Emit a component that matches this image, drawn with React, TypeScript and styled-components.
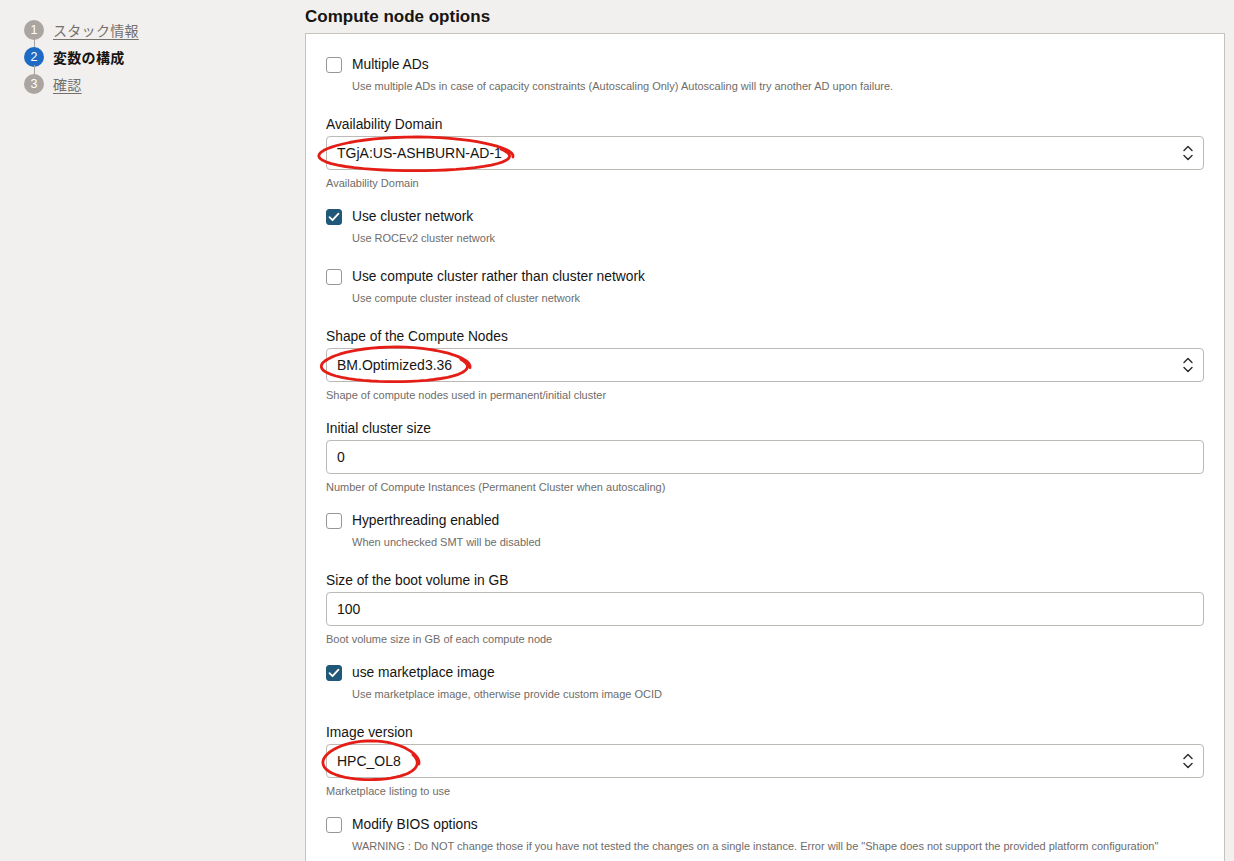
import React from 'react'
import styled, {createGlobalStyle} from 'styled-components'

const GlobalStyle = createGlobalStyle`
    html, body {
        margin: 0;
        padding: 0;
        background: #f2f0ee;
        font-family: "Liberation Sans", Arial, "Noto Sans CJK JP", sans-serif;
        color: #161513;
    }
`;

const Page = styled.div`
    display: flex;
    align-items: flex-start;
    min-height: 861px;
`;

const Sidebar = styled.nav`
    width: 305px;
    flex-shrink: 0;
    box-sizing: border-box;
    padding: 16px 0 0 24px;
    display: flex;
    flex-direction: column;
`;

const Step = styled.div<{ $last?: boolean }>`
    position: relative;
    display: flex;
    align-items: center;
    gap: 9px;
    height: 27px;

    &::after {
        content: '';
        display: ${props => props.$last ? 'none' : 'block'};
        position: absolute;
        left: 9.5px;
        top: 22px;
        width: 1px;
        height: 10px;
        background: #a9a49f;
    }
`;

const StepNum = styled.span<{ $active?: boolean }>`
    width: 20px;
    height: 20px;
    border-radius: 50%;
    background: ${props => props.$active ? '#1f6bc4' : '#aaa5a0'};
    color: #fff;
    font-size: 12.5px;
    display: flex;
    align-items: center;
    justify-content: center;
`;

const StepLabel = styled.span<{ $active?: boolean }>`
    font-size: 14px;
    font-family: "Noto Sans CJK JP", sans-serif;
    font-weight: ${props => props.$active ? 700 : 400};
    color: ${props => props.$active ? '#161513' : '#74706c'};
    text-decoration: ${props => props.$active ? 'none' : 'underline'};
    text-underline-offset: 3px;
    letter-spacing: 0.3px;
`;

const Main = styled.main`
    padding-top: 7px;
    display: flex;
    flex-direction: column;
`;

const Title = styled.h2`
    margin: 0 0 6px;
    font-size: 17px;
    line-height: 20px;
    font-weight: 700;
`;

const Panel = styled.section`
    width: 920px;
    box-sizing: border-box;
    background: #fff;
    border: 1px solid #c6c2be;
    padding: 22px 20px 20px;
    display: flex;
    flex-direction: column;
`;

const CheckField = styled.div`
    margin-bottom: 23px;
`;

const CheckRow = styled.label`
    display: flex;
    align-items: center;
    gap: 10px;
    height: 16px;
    font-size: 13.8px;
    line-height: 16px;
    padding-top: 1px;
`;

const Box = styled.span<{ $checked?: boolean }>`
    width: 16px;
    height: 16px;
    box-sizing: border-box;
    border-radius: 3px;
    border: 1px solid ${props => props.$checked ? '#1f5878' : '#9a9693'};
    background: ${props => props.$checked ? '#1f5878' : '#fff'};
    display: flex;
    align-items: center;
    justify-content: center;
`;

const Help = styled.div<{ $indent?: boolean }>`
    font-size: 11px;
    line-height: 14px;
    color: #6f6c69;
    margin-top: 6px;
    margin-left: ${props => props.$indent ? '26px' : '0'};
`;

const InputField = styled.div`
    margin-bottom: 18px;
`;

const Label = styled.div`
    font-size: 13.8px;
    line-height: 16px;
    padding-top: 1px;
    margin-bottom: 3px;
`;

const Control = styled.div`
    position: relative;
    height: 34px;
    box-sizing: border-box;
    border: 1px solid #bdb9b5;
    border-radius: 4px;
    background: #fff;
    display: flex;
    align-items: center;
    justify-content: space-between;
    padding: 0 9px 0 10px;
    font-size: 14px;
`;

const Mark = styled.svg`
    position: absolute;
    overflow: visible;
    pointer-events: none;
`;

function CheckIcon() {
    return (
        <svg width="12" height="10" viewBox="0 0 12 10">
            <path d="M1.5 5.2 L4.5 8.2 L10.5 1.6" fill="none" stroke="#fff" strokeWidth="1.8"
                  strokeLinecap="round" strokeLinejoin="round"/>
        </svg>
    )
}

function Chevrons() {
    return (
        <svg width="12" height="18" viewBox="0 0 12 18">
            <path d="M2 6.5 L6 2.5 L10 6.5 M2 11.5 L6 15.5 L10 11.5" fill="none" stroke="#2a2826"
                  strokeWidth="1.4" strokeLinecap="round" strokeLinejoin="round"/>
        </svg>
    )
}

// hand drawn red loop round a value
function Scribble({x, y, w, h}: { x: number, y: number, w: number, h: number }) {
    const cx = w / 2, cy = h / 2;
    const pts: string[] = [];
    for (let i = 0; i <= 60; i++) {
        const t = -0.35 + (i / 60) * (Math.PI * 2 + 0.5);
        const k = 1 + 0.03 * Math.sin(t * 3) + (i / 60) * 0.04;
        const px = cx + Math.cos(t) * (w / 2) * k;
        const py = cy + Math.sin(t) * (h / 2) * k;
        pts.push(`${i === 0 ? 'M' : 'L'}${px.toFixed(1)} ${py.toFixed(1)}`);
    }
    return (
        <Mark width={w} height={h} style={{left: x, top: y}}>
            <path d={pts.join(' ')} fill="none" stroke="#e41e17" strokeWidth="2.8" strokeLinecap="round"
                  strokeLinejoin="round"/>
        </Mark>
    )
}

interface CheckProps {
    label: string;
    help: string;
    checked?: boolean;
}

function Check({label, help, checked}: CheckProps) {
    return (
        <CheckField>
            <CheckRow>
                <Box $checked={checked}>{checked && <CheckIcon/>}</Box>
                {label}
            </CheckRow>
            <Help $indent>{help}</Help>
        </CheckField>
    )
}

interface InputProps {
    label: string;
    value: string;
    help: string;
    select?: boolean;
    mark?: { x: number, y: number, w: number, h: number };
}

function Input({label, value, help, select, mark}: InputProps) {
    return (
        <InputField>
            <Label>{label}</Label>
            <Control>
                <span>{value}</span>
                {select && <Chevrons/>}
                {mark && <Scribble {...mark}/>}
            </Control>
            <Help>{help}</Help>
        </InputField>
    )
}

export default function App() {
    return (
        <Page>
            <GlobalStyle/>
            <Sidebar>
                <Step>
                    <StepNum>1</StepNum>
                    <StepLabel>スタック情報</StepLabel>
                </Step>
                <Step>
                    <StepNum $active>2</StepNum>
                    <StepLabel $active>変数の構成</StepLabel>
                </Step>
                <Step $last>
                    <StepNum>3</StepNum>
                    <StepLabel>確認</StepLabel>
                </Step>
            </Sidebar>
            <Main>
                <Title>Compute node options</Title>
                <Panel>
                    <Check label="Multiple ADs"
                           help="Use multiple ADs in case of capacity constraints (Autoscaling Only) Autoscaling will try another AD upon failure."/>
                    <Input label="Availability Domain" value="TGjA:US-ASHBURN-AD-1" help="Availability Domain" select
                           mark={{x: -6, y: 1, w: 188, h: 33}}/>
                    <Check label="Use cluster network" help="Use ROCEv2 cluster network" checked/>
                    <Check label="Use compute cluster rather than cluster network"
                           help="Use compute cluster instead of cluster network"/>
                    <Input label="Shape of the Compute Nodes" value="BM.Optimized3.36"
                           help="Shape of compute nodes used in permanent/initial cluster" select
                           mark={{x: -4, y: -1, w: 144, h: 34}}/>
                    <Input label="Initial cluster size" value="0"
                           help="Number of Compute Instances (Permanent Cluster when autoscaling)"/>
                    <Check label="Hyperthreading enabled" help="When unchecked SMT will be disabled"/>
                    <Input label="Size of the boot volume in GB" value="100"
                           help="Boot volume size in GB of each compute node"/>
                    <Check label="use marketplace image"
                           help="Use marketplace image, otherwise provide custom image OCID" checked/>
                    <Input label="Image version" value="HPC_OL8" help="Marketplace listing to use" select
                           mark={{x: -3, y: -3, w: 93, h: 38}}/>
                    <Check label="Modify BIOS options"
                           help={'WARNING : Do NOT change those if you have not tested the changes on a single instance. Error will be "Shape does not support the provided platform configuration"'}/>
                </Panel>
            </Main>
        </Page>
    )
}
